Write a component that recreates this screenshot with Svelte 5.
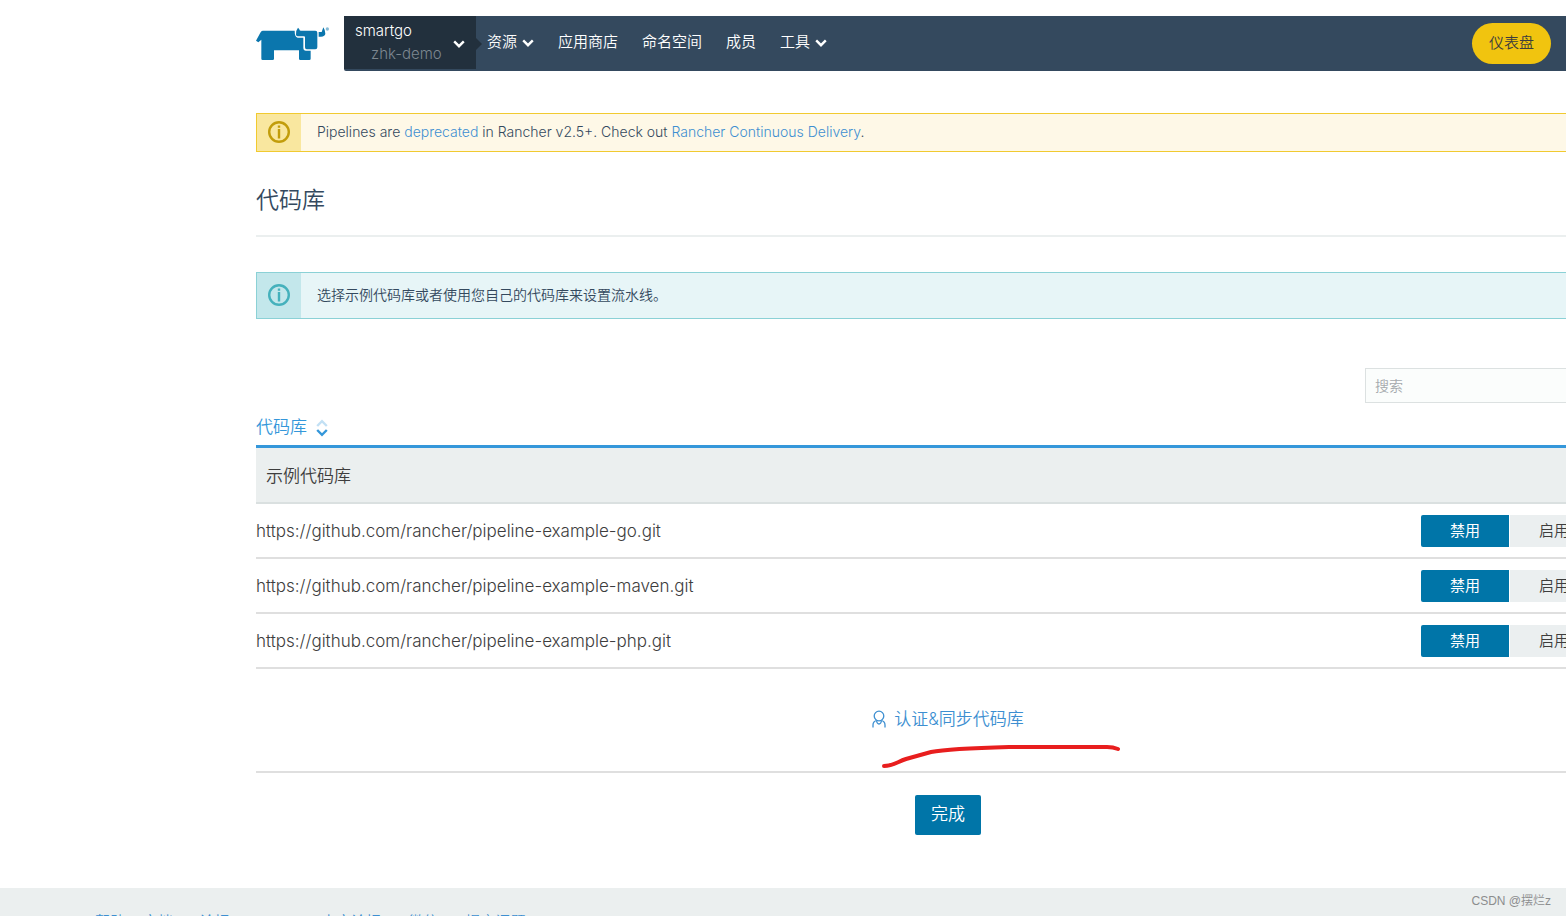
<script lang="ts">
  type Repo = { url: string; enabled: boolean };

  const navItems = [
    { label: '资源', menu: true },
    { label: '应用商店', menu: false },
    { label: '命名空间', menu: false },
    { label: '成员', menu: false },
    { label: '工具', menu: true }
  ];

  const footerLinks = ['帮助 & 文档', '论坛', 'Slack', '中文论坛', '微信', '提交问题'];

  let repos: Repo[] = $state([
    { url: 'https://github.com/rancher/pipeline-example-go.git', enabled: false },
    { url: 'https://github.com/rancher/pipeline-example-maven.git', enabled: false },
    { url: 'https://github.com/rancher/pipeline-example-php.git', enabled: false }
  ]);

  let search = $state('');
  let visible = $derived(repos.filter((repo) => repo.url.includes(search)));
</script>

{#snippet chevron()}
  <svg class="chevron" viewBox="0 0 12 8" aria-hidden="true">
    <path d="M1.2 1.4 6 6.2l4.800-4.800" />
  </svg>
{/snippet}

{#snippet info()}
  <svg class="info" viewBox="0 0 22 22" aria-hidden="true">
    <circle cx="11" cy="11" r="9.800" />
    <path d="M11 8v9.500M11 4.400v2.400" />
  </svg>
{/snippet}

<div class="page">
  <div class="container">
    <header>
      <a class="logo" href="#home" aria-label="Rancher">
        <svg viewBox="0 0 222 102" aria-hidden="true">
          <path
            d="M20 11H116Q116 30 125 32H142V62Q142 71 150 71H164V95Q164 99 160 99H133Q129 99 129 95V70H54V95Q54 99 50 99H20Q16 99 16 95V38L7 46 0 41 13 17Q16 11 20 11Z"
          />
          <path
            d="M126 2Q119 10 120 23 121 28 126 28H144Q147 28 147 31V61Q147 67 152 67H178Q184 67 184 61V17Q184 11 178 11H134Q130 11 130 7Z"
          />
          <path d="M202 1 197 15H188V29H195Q207 28 208 20 208 10 202 1Z" />
          <circle cx="214" cy="6" r="5" opacity=".5" />
        </svg>
      </a>
      <nav>
        <button class="project" type="button">
          <span class="names">
            <span>smartgo</span>
            <span class="sub">zhk-demo</span>
          </span>
          {@render chevron()}
        </button>
        <ul>
          {#each navItems as item}
            <li>
              <a href="#nav">
                {item.label}
                {#if item.menu}{@render chevron()}{/if}
              </a>
            </li>
          {/each}
        </ul>
        <a class="dashboard" href="#dashboard">仪表盘</a>
      </nav>
    </header>

    <main>
      <section class="banner warning">
        <div class="banner-icon">{@render info()}</div>
        <p>
          Pipelines are <a href="#deprecated">deprecated</a> in Rancher v2.5+. Check out
          <a href="#delivery">Rancher Continuous Delivery</a>.
        </p>
      </section>

      <h1>代码库</h1>

      <section class="banner notice">
        <div class="banner-icon">{@render info()}</div>
        <p>选择示例代码库或者使用您自己的代码库来设置流水线。</p>
      </section>

      <div class="search">
        <input type="search" placeholder="搜索" aria-label="搜索" bind:value={search} />
      </div>

      <table>
        <thead>
          <tr>
            <th colspan="2">
              <button class="sort" type="button">
                代码库
                <svg viewBox="0 0 12 18" aria-hidden="true">
                  <path class="up" d="M1.200 7 6 2.200 10.800 7" />
                  <path d="M1.200 11 6 15.800 10.800 11" />
                </svg>
              </button>
            </th>
          </tr>
        </thead>
        <tbody>
          <tr class="group">
            <td colspan="2">示例代码库</td>
          </tr>
          {#each visible as repo}
            <tr>
              <td>{repo.url}</td>
              <td class="actions">
                <div class="toggle">
                  <button
                    type="button"
                    class:active={!repo.enabled}
                    onclick={() => (repo.enabled = false)}>禁用</button
                  >
                  <button
                    type="button"
                    class:active={repo.enabled}
                    onclick={() => (repo.enabled = true)}>启用</button
                  >
                </div>
              </td>
            </tr>
          {/each}
        </tbody>
      </table>

      <div class="authorize">
        <a href="#authorize">
          <svg class="user" viewBox="0 0 14 18" aria-hidden="true">
            <circle cx="7" cy="6" r="4.800" />
            <path d="M1 17.500V15Q1 11.500 4.500 10.500M13 17.500V15Q13 11.500 9.500 10.500M4.500 10.500Q5 14 7 14T9.500 10.500" />
          </svg>
          认证&同步代码库
        </a>
        <svg class="stroke" viewBox="0 0 240 26" aria-hidden="true">
          <path d="M3 21C12 21 16 17 25 14L50 7C66 4 92 3 128 2H226Q232 2 237 4" />
        </svg>
      </div>

      <div class="done">
        <button type="button">完成</button>
      </div>
    </main>
  </div>

  <footer>
    {#each footerLinks as link}
      <a href="#footer">{link}</a>
    {/each}
  </footer>
  <span class="watermark">CSDN @摆烂z</span>
</div>

<style>
  :global(body) {
    margin: 0;
    background: #fff;
  }

  .page {
    position: relative;
    height: 100vh;
    overflow: hidden;
    color: #3d3d3d;
    font-family: Inter, 'Noto Sans CJK SC', sans-serif;
    font-size: 14px;
    font-weight: 350;
  }

  .page :global(*) {
    box-sizing: border-box;
  }

  .container {
    min-width: 1640px;
    padding: 16px 0 0 256px;
  }

  a {
    color: #3d8fd1;
    text-decoration: none;
  }

  button {
    border: 0;
    font: inherit;
    cursor: pointer;
  }

  header {
    display: flex;
    height: 55px;
  }

  .logo {
    width: 88px;
    padding-top: 11px;
  }

  .logo svg {
    display: block;
    width: 74px;
    height: 34px;
    fill: #0b76ad;
  }

  nav {
    flex: 1;
    display: flex;
    background: #34495e;
    border-radius: 0 0 0 2px;
    font-size: 15px;
  }

  .chevron {
    width: 12px;
    height: 8px;
    margin-top: 2px;
    fill: none;
    stroke: #fff;
    stroke-width: 2.4;
  }

  .project {
    position: relative;
    display: flex;
    align-items: center;
    justify-content: space-between;
    width: 132px;
    height: 53px;
    padding: 0 11px;
    background: #22303d;
    color: #fff;
    font-size: 15px;
    line-height: 23px;
    text-align: left;
  }

  .project::after {
    content: '';
    position: absolute;
    left: 100%;
    top: 22px;
    border: 6px solid transparent;
    border-left-color: #22303d;
    border-right: 0;
  }

  .names {
    display: flex;
    flex-direction: column;
    padding-bottom: 2px;
  }

  .sub {
    padding-left: 16px;
    color: #7d8790;
  }

  ul {
    flex: 1;
    display: flex;
    gap: 24px;
    margin: 0;
    padding: 0 0 0 11px;
    list-style: none;
  }

  li a {
    display: flex;
    align-items: center;
    gap: 5px;
    color: #fff;
    line-height: 52px;
  }

  .dashboard {
    height: 41px;
    margin: 7px 89px 0 0;
    padding: 0 17px;
    border-radius: 21px;
    background: #f1c40f;
    color: #3d3d3d;
    line-height: 39px;
  }

  main {
    padding-top: 42px;
  }

  .banner {
    display: flex;
    border: 1px solid;
    border-right: 0;
    color: #34495e;
  }

  .banner-icon {
    display: flex;
    align-items: center;
    justify-content: center;
    width: 44px;
    padding-bottom: 1px;
  }

  .banner p {
    margin: 0;
    padding: 0 16px 1px;
    line-height: 36px;
  }

  .info {
    width: 22px;
    height: 22px;
    fill: none;
    stroke: currentColor;
    stroke-width: 2.4;
  }

  .warning {
    background: #fef8e7;
    border-color: #f1ca30;
  }

  .warning .banner-icon {
    background: #f9e79f;
    color: #c29d0b;
  }

  .notice {
    background: #e7f5f7;
    border-color: #8bd1d6;
  }

  .notice .banner-icon {
    background: #c3e7eb;
    color: #45b1bc;
  }

  .notice p {
    line-height: 44px;
  }

  h1 {
    margin: 0 0 35px;
    padding: 30px 0 17px;
    border-bottom: 2px solid #ebefef;
    color: #34495e;
    font-size: 23px;
    font-weight: 350;
    line-height: 36px;
  }

  .search {
    display: flex;
    justify-content: flex-end;
    margin-top: 49px;
  }

  input {
    width: 275px;
    height: 35px;
    padding: 0 9px;
    border: 1px solid #dce1e1;
    background: #fbfdfc;
    font: inherit;
  }

  input::placeholder {
    color: #a5a9ad;
  }

  table {
    width: 100%;
    margin-top: 6px;
    border-collapse: separate;
    border-spacing: 0;
    font-size: 17px;
  }

  th {
    height: 39px;
    padding: 0;
    border-bottom: 3px solid #3497da;
    font-weight: 350;
    text-align: left;
  }

  .sort {
    display: flex;
    align-items: center;
    gap: 9px;
    padding: 0;
    background: none;
    color: #3497da;
    line-height: 24px;
  }

  .sort svg {
    width: 12px;
    height: 18px;
    margin-top: 2px;
    fill: none;
    stroke: #3497da;
    stroke-width: 2.4;
  }

  .sort .up {
    opacity: 0.3;
  }

  td {
    height: 55px;
    padding: 0;
    border-bottom: 2px solid #dfdfdf;
  }

  .group td {
    height: 56px;
    padding: 0 0 2px 10px;
    background: #ebefef;
    border-color: #dae0e0;
  }

  .actions {
    width: 219px;
  }

  .toggle {
    display: flex;
    gap: 1px;
    font-size: 15px;
  }

  .toggle button {
    width: 88px;
    height: 32px;
    padding: 0 0 2px;
    border-radius: 0 2px 2px 0;
    background: #ebeff0;
    color: #3d3d3d;
  }

  .toggle button:first-child {
    border-radius: 2px 0 0 2px;
  }

  .toggle .active {
    background: #0075a8;
    color: #fff;
    font-weight: 400;
  }

  .authorize {
    position: relative;
    display: flex;
    justify-content: center;
    height: 104px;
    padding-top: 38px;
    border-bottom: 2px solid #dfdfdf;
    font-size: 17px;
    line-height: 24px;
  }

  .authorize a {
    display: flex;
    align-items: center;
    height: 24px;
    gap: 8px;
  }

  .user {
    width: 14px;
    height: 18px;
    fill: none;
    stroke: #3d8fd1;
    stroke-width: 1.3;
  }

  /* hand-drawn marker under the link */
  .stroke {
    position: absolute;
    left: 625px;
    top: 76px;
    width: 240px;
    height: 26px;
    fill: none;
    stroke: #e81e1e;
    stroke-width: 4;
    stroke-linecap: round;
  }

  .done {
    display: flex;
    justify-content: center;
    padding: 22px 0 53px;
  }

  .done button {
    height: 40px;
    padding: 0 16px 2px;
    border-radius: 2px;
    background: #0075a8;
    color: #fff;
    font-size: 17px;
    line-height: 38px;
  }

  footer {
    display: flex;
    gap: 27px;
    height: 60px;
    padding: 23px 95px 0;
    background: #ebefef;
    font-size: 15px;
    line-height: 22px;
  }

  .watermark {
    position: absolute;
    right: 15px;
    bottom: 6px;
    color: #8b8d8e;
    font-family: 'Liberation Sans', 'Noto Sans CJK SC', sans-serif;
    font-size: 12px;
    line-height: 18px;
  }
</style>
